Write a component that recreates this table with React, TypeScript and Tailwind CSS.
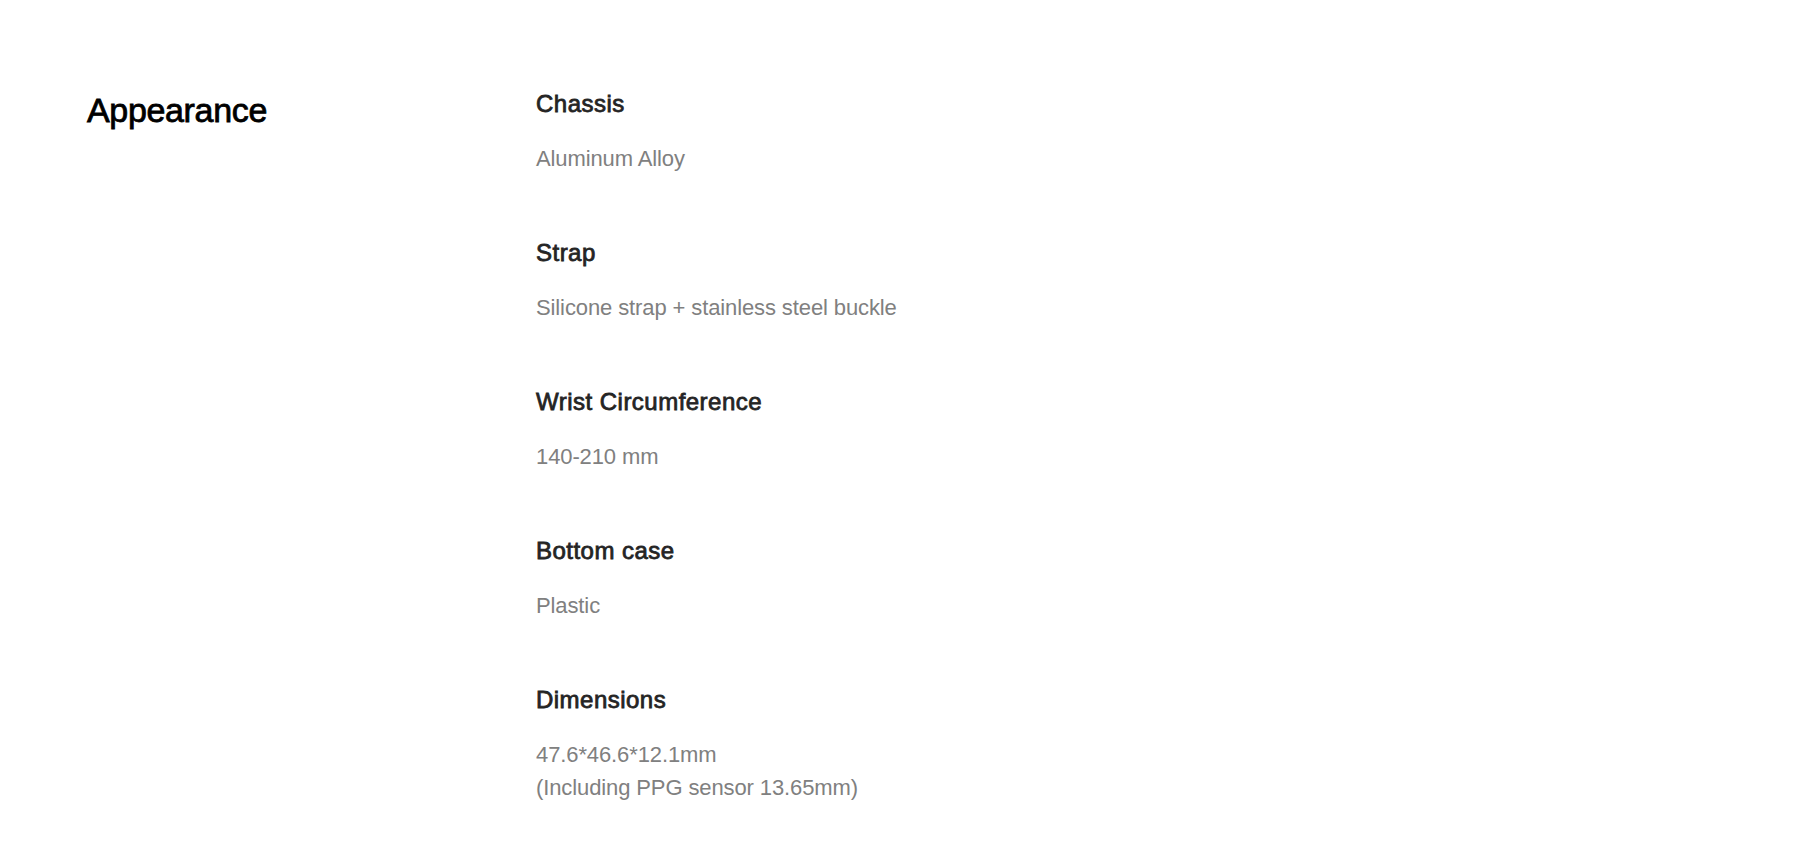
const specs = [
  { label: "Chassis", value: ["Aluminum Alloy"] },
  { label: "Strap", value: ["Silicone strap + stainless steel buckle"] },
  { label: "Wrist Circumference", value: ["140-210 mm"] },
  { label: "Bottom case", value: ["Plastic"] },
  {
    label: "Dimensions",
    value: ["47.6*46.6*12.1mm", "(Including PPG sensor 13.65mm)"],
  },
];

export default function App() {
  return (
    <div className="min-h-[846px] bg-white font-['Liberation_Sans',Arial,sans-serif]">
      <div className="flex px-[87px] pt-[88px]">
        <div className="w-[449px] shrink-0 pt-[2px]">
          <h2 className="text-[34px] leading-[40px] tracking-[-0.01em] font-normal text-black [-webkit-text-stroke:0.8px_#000]">
            Appearance
          </h2>
        </div>
        <div className="flex flex-col gap-[62px]">
          {specs.map((spec) => (
            <div key={spec.label} className="flex flex-col gap-[22px]">
              <h3 className="text-[24px] leading-[32px] font-normal tracking-[0.02em] text-[#242424] [-webkit-text-stroke:0.8px_#242424]">
                {spec.label}
              </h3>
              <div className="text-[22px] leading-[33px] tracking-[-0.005em] text-[#808080]">
                {spec.value.map((line) => (
                  <p key={line}>{line}</p>
                ))}
              </div>
            </div>
          ))}
        </div>
      </div>
    </div>
  );
}
